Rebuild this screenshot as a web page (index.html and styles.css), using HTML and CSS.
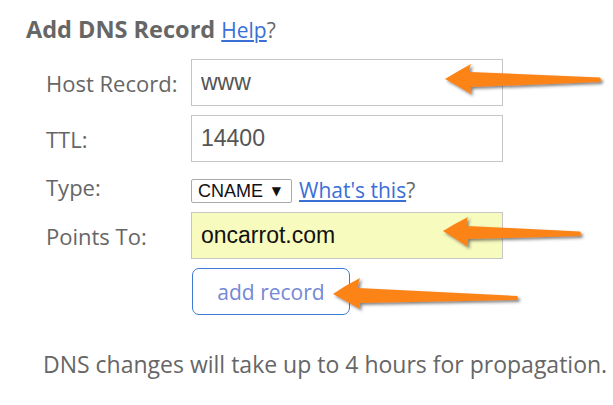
FILE: index.html
```html
<!DOCTYPE html>
<html lang="en">
<head>
    <meta charset="UTF-8">
    <title>Add DNS Record</title>
    <link rel="stylesheet" href="styles.css">
</head>
<body>
    <div class="panel">
        <h2 class="title">Add DNS Record <span class="help"><a href="#">Help</a>?</span></h2>
        <div class="form">
            <div class="form-row">
                <label for="host">Host Record:</label>
                <input type="text" id="host" value="www">
            </div>
            <div class="form-row">
                <label for="ttl">TTL:</label>
                <input type="text" id="ttl" value="14400">
            </div>
            <div class="form-row type-row">
                <label>Type:</label>
                <div class="select-box"><span>CNAME</span><span class="caret">&#9660;</span></div>
                <span class="hint"><a href="#">What's this</a>?</span>
            </div>
            <div class="form-row">
                <label for="points">Points To:</label>
                <input type="text" id="points" class="highlight" value="oncarrot.com">
            </div>
            <div class="form-row button-row">
                <button>add record</button>
            </div>
        </div>
        <p class="note">DNS changes will take up to 4 hours for propagation.</p>
    </div>

    <!-- annotation arrows drawn over the form -->
    <svg class="arrows" width="613" height="405" viewBox="0 0 613 405">
        <defs>
            <filter id="shadow" x="-10%" y="-50%" width="120%" height="200%">
                <feDropShadow dx="2" dy="2" stdDeviation="1.5" flood-color="#333" flood-opacity="0.6"/>
            </filter>
        </defs>
        <g fill="#fc8419" filter="url(#shadow)">
            <path d="M445 79 Q460 70 471 64 Q469 68 470 72 L600 77.5 Q602 80 600 82 L471 87 Q470 91 471 94 Q458 86 445 79 Z"/>
            <path d="M443 231 Q456 223 468 217 Q466 222 467 226 L580 231.5 Q582 234 580 236 L468 239 Q467 243 468 247 Q456 239 443 231 Z"/>
            <path d="M333 294 Q346 285 360 278 Q358 283 358 288 L517 296 Q519 298 517 300 L360 303 Q359 306 360 309 Q346 301 333 294 Z"/>
        </g>
    </svg>
</body>
</html>
```

FILE: styles.css
```css
body {
    margin: 0;
    font-family: "Open Sans", sans-serif;
    color: #666;
    background-color: #fff;
}
a {
    color: #3a6fd8;
}
.panel {
    padding: 14px 0 0 26px;
}
.title {
    margin: 0;
    font-size: 23.5px;
    font-weight: bold;
    line-height: 30px;
}
.help {
    font-size: 21px;
    font-weight: normal;
}
.form {
    margin: 14px 0 0 20px;
}
.form-row {
    display: flex;
    align-items: center;
    margin-bottom: 9px;
}
.form-row label {
    width: 145px;
    font-size: 22px;
}
input[type="text"] {
    box-sizing: border-box;
    width: 312px;
    height: 47px;
    padding: 0 9px;
    border: 1px solid #c6c6c6;
    font-family: "Liberation Sans", Arial, sans-serif;
    font-size: 23px;
    color: #555;
    background-color: #fff;
}
input.highlight {
    color: #111;
    background-color: #f8fbbe;
}
.type-row {
    height: 32px;
    align-items: flex-end;
}
.type-row label {
    align-self: center;
}
.select-box {
    box-sizing: border-box;
    display: flex;
    align-items: center;
    justify-content: space-between;
    white-space: nowrap;
    height: 24px;
    width: 101px;
    padding: 0 10px 0 6px;
    border: 1px solid #aaa;
    border-radius: 2px;
    font-family: "Liberation Sans", Arial, sans-serif;
    font-size: 18px;
    color: #111;
}
.caret {
    font-family: "DejaVu Sans", sans-serif;
    font-size: 12px;
}
.hint {
    margin-left: 7px;
    font-size: 21px;
    line-height: 26px;
}
.button-row {
    padding-left: 146px;
}
button {
    box-sizing: border-box;
    width: 158px;
    height: 47px;
    border: 1px solid #3f7ad6;
    border-radius: 7px;
    background-color: #fff;
    font-family: "Open Sans", sans-serif;
    font-size: 21px;
    color: #7489d4;
    cursor: pointer;
}
.note {
    margin: 33px 0 0 17px;
    font-size: 23px;
}
.arrows {
    position: absolute;
    left: 0;
    top: 0;
    pointer-events: none;
}
```
